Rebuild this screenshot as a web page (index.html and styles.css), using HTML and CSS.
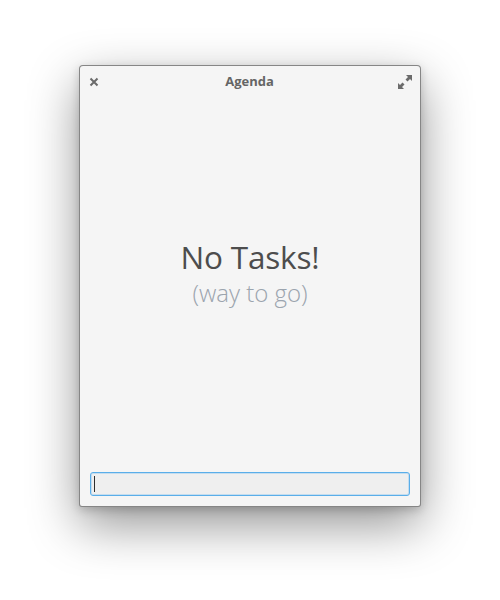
FILE: index.html
```html
<!DOCTYPE html>
<html>
<head>
<meta charset="utf-8">
<link rel="stylesheet" href="styles.css">
</head>
<body>
<div class="window">
  <div class="titlebar">
    <button class="tb-btn close" aria-label="Close">
      <svg width="10" height="10" viewBox="0 0 10 10"><path d="M1.5 1.5 L8.5 8.5 M8.5 1.5 L1.5 8.5" stroke="#6b6b6b" stroke-width="2" stroke-linecap="butt"/></svg>
    </button>
    <div class="title">Agenda</div>
    <button class="tb-btn max" aria-label="Maximize">
      <svg width="14" height="14" viewBox="0 0 14 14" fill="#6b6b6b">
        <path d="M8 0 H14 V6 L12 4 L9.5 6.5 L7.5 4.5 L10 2 Z"/>
        <path d="M0 14 V8 L2 10 L4.5 7.5 L6.5 9.5 L4 12 L6 14 Z"/>
      </svg>
    </button>
  </div>
  <div class="content">
    <div class="empty-title">No Tasks!</div>
    <div class="empty-sub">(way to go)</div>
  </div>
  <div class="entry-row">
    <div class="entry-wrap">
      <input class="entry" type="text">
      <span class="caret"></span>
    </div>
  </div>
</div>
</body>
</html>
```
FILE: styles.css
```css
html, body {
  margin: 0;
  padding: 0;
  background: #ffffff;
}
body {
  width: 500px;
  height: 600px;
  font-family: "Open Sans", "Noto Sans", sans-serif;
  display: flex;
  justify-content: center;
  padding-top: 65px;
  box-sizing: border-box;
}
.window {
  width: 342px;
  height: 442px;
  box-sizing: border-box;
  background: #f5f5f5;
  border: 1px solid rgba(0,0,0,0.45);
  border-radius: 4px 4px 3px 3px;
  box-shadow: 0 18px 50px rgba(0,0,0,0.42), 0 3px 10px rgba(0,0,0,0.18);
  display: flex;
  flex-direction: column;
}
.titlebar {
  height: 30px;
  display: flex;
  align-items: center;
  justify-content: space-between;
  padding: 0 7px 0 6px;
}
.tb-btn {
  border: none;
  background: none;
  padding: 0;
  width: 16px;
  height: 16px;
  display: flex;
  align-items: center;
  justify-content: center;
  margin-top: 1px;
}
.title {
  font-weight: 700;
  font-size: 13px;
  color: #656565;
  margin-top: -1px;
}
.content {
  flex: 1;
  display: flex;
  flex-direction: column;
  align-items: center;
  justify-content: center;
  padding-bottom: 24px;
}
.empty-title {
  font-size: 31.5px;
  font-weight: 400;
  color: #4d4d4d;
  line-height: 40px;
  letter-spacing: -0.2px;
}
.empty-sub {
  font-size: 24px;
  font-weight: 300;
  color: #9ba4ae;
  line-height: 30px;
  margin-top: 1px;
}
.entry-row {
  padding: 0 10px 10px 10px;
}
.entry-wrap {
  position: relative;
}
.entry {
  display: block;
  width: 100%;
  height: 24px;
  box-sizing: border-box;
  background: #efefef;
  border: 1px solid #5aaee9;
  border-radius: 3px;
  box-shadow: inset 0 0 0 1px rgba(120, 190, 240, 0.35);
  outline: none;
  padding: 0 4px;
  font-family: "Open Sans", sans-serif;
  font-size: 13px;
}
.caret {
  position: absolute;
  left: 4px;
  top: 4px;
  width: 1px;
  height: 16px;
  background: #2e2e2e;
}
```
